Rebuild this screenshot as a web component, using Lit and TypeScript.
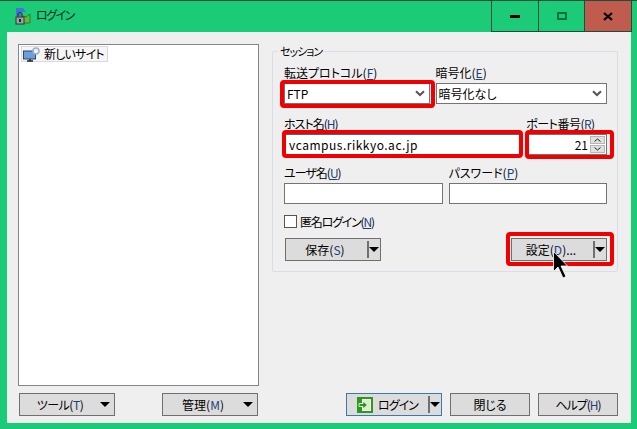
import { LitElement, html, css } from "lit";
import { customElement } from "lit/decorators.js";

const arrow = html`<svg class="arr" width="10" height="5" viewBox="0 0 10 5"><path d="M0 0h10L5 5z" fill="#000"/></svg>`;
const chev = html`<svg class="chev" width="10" height="7" viewBox="0 0 10 7"><path d="M1 1.200 5 5l4-3.800" fill="none" stroke="#555" stroke-width="2"/></svg>`;

@customElement("app-root")
export class AppRoot extends LitElement {
  static styles = css`
    :host { display: block; width: 637px; height: 429px; overflow: hidden; position: relative;
      font-family: "Noto Sans CJK JP", "Noto Sans", sans-serif; font-size: 12px; color: #000;
      font-feature-settings: "palt"; }
    * { box-sizing: border-box; }
    .win { width: 637px; height: 429px; background: #1bcb78; border-top: 1px solid #1f4d3c; display: flex; flex-direction: column; }
    .title { height: 31px; display: flex; align-items: stretch; flex: none; }
    .ticon { margin: 6px 0 0 15px; width: 17px; height: 18px; }
    .ttext { margin: 3px 0 0 4px; font-size: 12px; line-height: 22px; flex: 1; color: #0b2b20; letter-spacing: -1.5px; }
    .caps { display: flex; margin-right: 5px; height: 31px; border: 1px solid #1f4d3c; border-top: none; }
    .cap { display: flex; align-items: center; justify-content: center; }
    .cap.a { width: 47px; border-right: 1px solid #1f4d3c; }
    .cap.b { width: 46px; border-right: 1px solid #1f4d3c; }
    .cap.c { width: 46px; background: #bf5c4e; }
    .body { margin: 0 6px 6px 7px; flex: 1; background: #efefef; padding: 12px 13px 7px 11px; display: flex; flex-direction: column; }
    .main { flex: 1; display: flex; min-height: 0; }
    .tree { width: 241px; height: 342px; background: #fff; border: 1px solid #82878c; padding: 1px 2px; flex: none; }
    .node { display: inline-flex; align-items: center; height: 16px; background: #f6f6f6; border: 1px solid #d9d9d9; padding: 0 3px 0 1px; gap: 4px; line-height: 14px; letter-spacing: -0.8px; }
    .group { position: relative; margin: 7px 0 0 13px; width: 346px; height: 221px; border: 1px solid #d9dde6; border-radius: 2px; padding: 14px 10px 0 11px; display: flex; flex-direction: column; }
    .legend { position: absolute; left: 5px; top: -8px; background: #efefef; padding: 0 2px; line-height: 14px; font-size: 11px; letter-spacing: -1px; }
    .row { display: flex; }
    .field { display: flex; flex-direction: column; }
    label { display: block; line-height: 13px; height: 17px; white-space: nowrap; }
    label.tight { letter-spacing: -1px; }
    u { color: #1c3f7c; }
    .box { height: 21px; background: #fff; border: 1px solid #747474; display: flex; align-items: center; padding: 0 3px 0 4px; line-height: 16px; white-space: nowrap; }
    .sel { justify-content: space-between; padding-left: 2px; padding-right: 4px; }
    .chev { flex: none; }
    .ro2 { margin-top: 13px; }
    .ro3 { margin-top: 11px; }
    .f1 { width: 146px; } .f2 { width: 172px; margin-left: 6px; }
    .host { width: 238px; } .port { width: 80px; margin-left: 6px; }
    .host .box { padding-left: 4px; letter-spacing: 0.5px; border-color: #3d6c9c; }
    .port label { margin-left: -1px; letter-spacing: -0.5px; }
    .port .box { justify-content: flex-end; padding: 0 1px 0 0; gap: 2px; }
    .spin { display: flex; flex-direction: column; gap: 1px; }
    .spin span { display: flex; align-items: center; justify-content: center; width: 15px; height: 8px; background: #e0e0e0; border: 1px solid #b5b5b5; }
    .u { width: 159px; } .p { width: 159px; margin-left: 6px; }
    .check { display: flex; align-items: center; gap: 3px; margin: 11px 0 0 0; height: 13px; line-height: 14px; letter-spacing: -1.2px; }
    .cb { width: 13px; height: 13px; background: #fff; border: 1px solid #555; flex: none; }
    .btnrow { display: flex; justify-content: space-between; margin: 10px 0 0 1px; }
    .btn { height: 23px; background: #dcdcdc; border: 1px solid #707070; display: flex; align-items: center; justify-content: center; line-height: 16px; white-space: nowrap; position: relative; }
    .btn u { text-decoration: none; }
    .split { width: 96px; padding-right: 16px; }
    .split i { position: absolute; right: 11px; top: 2px; height: 17px; width: 2px; background: #6f6f6f; }
    .split .arr { position: absolute; right: 1px; top: 8px; }
    .menu { width: 96px; padding-right: 14px; letter-spacing: -0.5px; }
    .menu .arr { position: absolute; right: 4px; top: 8px; }
    .foot { display: flex; padding: 0 0 0 1px; margin-top: 7px; flex: none; }
    .gapl { margin-left: 47px; letter-spacing: 0; }
    .login { margin-left: 88px; border-color: #3b78ab; gap: 5px; justify-content: flex-start; padding: 0 0 0 10px; letter-spacing: -1px; }
    .plain { width: 80px; margin-left: 8px; }
    .plain.help { letter-spacing: -1px; }
    .hi { position: absolute; border: 4px solid #f00000; border-radius: 4px; pointer-events: none; }
    .h1 { left: 280px; top: 80px; width: 155px; height: 28px; }
    .h2 { left: 282px; top: 130px; width: 241px; height: 28px; }
    .h3 { left: 525px; top: 130px; width: 89px; height: 29px; }
    .h4 { left: 506px; top: 232px; width: 108px; height: 34px; }
    .cursor { position: absolute; left: 553px; top: 251px; }
  `;

  render() {
    return html`
      <div class="win">
        <div class="title">
          <svg class="ticon" viewBox="0 0 17 18">
            <path d="M1 1h7l3 4H6v4H1z" fill="#3f78d8"/>
            <path d="M8 9l3 1 4-3v9H8z" fill="#6cb43a" stroke="#2f7f22"/>
            <rect x="1" y="10" width="8" height="7" fill="#9aa3a8" stroke="#333"/>
            <path d="M3 10V7.500a2 2 0 0 1 4 0V10" fill="none" stroke="#333" stroke-width="1.200"/>
            <rect x="4" y="12" width="2" height="3" fill="#222"/>
          </svg>
          <div class="ttext">ログイン</div>
          <div class="caps">
            <div class="cap a"><svg width="10" height="4"><rect width="10" height="3" y="1" fill="#000"/></svg></div>
            <div class="cap b"><svg width="10" height="8"><rect x="1" y="1" width="8" height="6" fill="none" stroke="#0c7040" stroke-width="2"/></svg></div>
            <div class="cap c"><svg width="10" height="9" viewBox="0 0 10 9"><path d="M1 1l8 7M9 1L1 8" stroke="#000" stroke-width="2.200"/></svg></div>
          </div>
        </div>
        <div class="body">
          <div class="main">
            <div class="tree">
              <div class="node">
                <svg width="17" height="15" viewBox="0 0 17 15">
                  <rect x="0.500" y="4" width="12" height="8" fill="#6a9fe0" stroke="#33475c"/>
                  <path d="M4 14h6M7 12v2" stroke="#222" stroke-width="1.500"/>
                  <circle cx="13" cy="4" r="3" fill="#eef2f8" stroke="#9fb0c2" stroke-width="1.500"/>
                </svg>
                <span>新しいサイト</span>
              </div>
            </div>
            <div class="group">
              <div class="legend">セッション</div>
              <div class="row">
                <div class="field f1"><label>転送プロトコル(<u>F</u>)</label><div class="box sel"><span>FTP</span>${chev}</div></div>
                <div class="field f2"><label>暗号化(<u>E</u>)</label><div class="box sel"><span>暗号化なし</span>${chev}</div></div>
              </div>
              <div class="row ro2">
                <div class="field host"><label class="tight">ホスト名(<u>H</u>)</label><div class="box">vcampus.rikkyo.ac.jp</div></div>
                <div class="field port"><label>ポート番号(<u>R</u>)</label>
                  <div class="box"><span>21</span><div class="spin">
                    <span><svg width="7" height="4"><path d="M.5 3.500 3.500 1l3 2.500" fill="none" stroke="#222"/></svg></span>
                    <span><svg width="7" height="4"><path d="M.5.500 3.500 3l3-2.500" fill="none" stroke="#222"/></svg></span>
                  </div></div>
                </div>
              </div>
              <div class="row ro3">
                <div class="field u"><label class="tight">ユーザ名(<u>U</u>)</label><div class="box"></div></div>
                <div class="field p"><label>パスワード(<u>P</u>)</label><div class="box"></div></div>
              </div>
              <div class="check"><div class="cb"></div><span>匿名ログイン(<u>N</u>)</span></div>
              <div class="btnrow">
                <div class="btn split">保存(<u>S</u>)<i></i>${arrow}</div>
                <div class="btn split">設定(<u>D</u>)...<i></i>${arrow}</div>
              </div>
            </div>
          </div>
          <div class="foot">
            <div class="btn menu">ツール(<u>T</u>)${arrow}</div>
            <div class="btn menu gapl">管理(<u>M</u>)${arrow}</div>
            <div class="btn split login">
              <svg width="16" height="16" viewBox="0 0 16 16">
                <rect width="16" height="16" fill="#2b9a1b"/>
                <rect x="5.500" y="2.500" width="8" height="11" fill="#d8f0c8" stroke="#fff"/>
                <path d="M2 6.500h4V4l4.500 4L6 12V9.500H2z" fill="#2b9a1b" stroke="#fff" stroke-width="0.800"/>
              </svg>
              <span>ログイン</span><i></i>${arrow}
            </div>
            <div class="btn plain">閉じる</div>
            <div class="btn plain help">ヘルプ(<u>H</u>)</div>
          </div>
        </div>
      </div>
      <div class="hi h1"></div><div class="hi h2"></div><div class="hi h3"></div><div class="hi h4"></div>
      <svg class="cursor" width="16" height="28" viewBox="0 0 16 28">
        <path d="M.5.500v20l4.500-4.500 5 11 3-1.500-5-10.500h6.500z" fill="#000" stroke="#fff" stroke-width="0.800"/>
      </svg>
    `;
  }
}
